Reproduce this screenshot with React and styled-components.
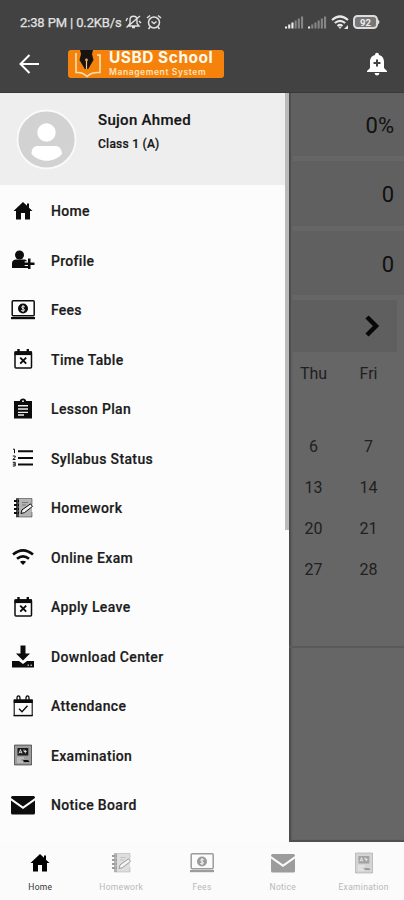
import React from "react";
import styled, { createGlobalStyle } from "styled-components";

const GlobalStyle = createGlobalStyle`
  * { box-sizing: border-box; }
  body { margin: 0; background: #fafafa; font-family: Roboto, sans-serif; }
  svg { display: block; flex: none; }
`;

const Screen = styled.div`
  width: 404px;
  height: 900px;
  display: flex;
  flex-direction: column;
  overflow: hidden;
  background: #fafafa;
`;

const Header = styled.header`
  height: 93px;
  flex: none;
  background: #424242;
  border-bottom: 1px solid #383838;
  color: #fff;
`;

const StatusBar = styled.div`
  height: 44px;
  padding: 0 24px 0 20px;
  display: flex;
  align-items: center;
  justify-content: space-between;
`;

const StatusText = styled.div`
  display: flex;
  align-items: center;
  gap: 4px;
  color: #e2e2e2;
  font-size: 13px;
  white-space: nowrap;
  -webkit-text-stroke: 0.25px #e2e2e2;
`;

const ClockLabel = styled.span`
  width: 101px;
  letter-spacing: -0.13px;
`;

const StatusIcons = styled.div`
  display: flex;
  align-items: center;
  gap: 4px;
`;

const AppBar = styled.div`
  height: 40px;
  padding: 0 15px 0 18px;
  display: flex;
  align-items: center;
`;

const Brand = styled.div`
  width: 156px;
  height: 28px;
  margin-left: 27px;
  margin-right: auto;
  padding-left: 4px;
  border-radius: 3px;
  background: #f5820b;
  display: flex;
  align-items: center;
  gap: 7px;
`;

const BrandText = styled.div`
  display: flex;
  flex-direction: column;
  gap: 1px;
  margin-top: -2px;
  white-space: nowrap;
`;

const BrandName = styled.span`
  font: 700 15.5px/16px Inter, sans-serif;
  letter-spacing: 0.5px;
  color: #fffaf0;
`;

const BrandSub = styled.span`
  font: 600 8.5px/10px Inter, sans-serif;
  letter-spacing: 0.6px;
  color: #ffe3bd;
`;

const Body = styled.div`
  flex: 1;
  min-height: 0;
  display: flex;
`;

const Drawer = styled.aside`
  position: relative;
  width: 289px;
  flex: none;
  background: #fcfcfc;
`;

const ScrollThumb = styled.div`
  position: absolute;
  top: 0;
  right: 0;
  width: 4px;
  height: 437px;
  background: #b9b9b9;
`;

const ProfileCard = styled.div`
  height: 92px;
  padding: 16px 16px 0;
  display: flex;
  gap: 21px;
  background: #eee;
`;

const ProfileText = styled.div`
  padding-top: 1px;
  display: flex;
  flex-direction: column;
  color: #161616;
`;

const StudentName = styled.span`
  font-size: 15px;
  line-height: 20px;
  font-weight: 500;
  letter-spacing: 0.3px;
  -webkit-text-stroke: 0.2px #161616;
`;

const StudentClass = styled.span`
  margin-top: 6px;
  font-size: 12px;
  line-height: 16px;
  font-weight: 500;
  letter-spacing: 0.25px;
  -webkit-text-stroke: 0.2px #161616;
`;

const Menu = styled.nav`
  padding-top: 1px;
`;

const MenuItem = styled.div`
  height: 49.5px;
  padding-left: 11px;
  display: flex;
  align-items: center;
  gap: 16px;
  color: #0c0c0c;
`;

const MenuLabel = styled.span`
  font-size: 14px;
  line-height: 18px;
  padding-top: 1px;
  font-weight: 500;
  color: #1c1c1c;
  -webkit-text-stroke: 0.2px #1c1c1c;
  letter-spacing: ${(p) => p.$tracking}px;
`;

const Page = styled.main`
  flex: 1;
  min-width: 0;
  background: #666;
  border-bottom: 2px solid #505050;
  box-shadow: inset 3px 0 2px -1px #484848;
  color: #101010;
`;

const StatCard = styled.div`
  height: ${(p) => p.$height}px;
  margin-bottom: 5px;
  padding: 2px 10px 0 0;
  margin-left: 2px;
  display: flex;
  align-items: center;
  justify-content: flex-end;
  background: #606060;
  font-size: 22px;
`;

const MonthBar = styled.div`
  height: 52px;
  margin: 3px 7px 0 2px;
  padding-right: 17px;
  display: flex;
  align-items: center;
  justify-content: flex-end;
  background: #5f5f5f;
`;

const Calendar = styled.div`
  height: 296px;
  padding-top: 1px;
  border-bottom: 2px solid #595959;
  display: grid;
  grid-template-columns: 49px 61px;
  grid-template-rows: 40px 33px repeat(4, 41px);
  align-content: start;
  text-align: center;
  font-size: 16px;
  color: #202020;
`;

const Cell = styled.span`
  line-height: 41px;
  grid-row: ${(p) => p.$row};
`;

const BottomNav = styled.nav`
  height: 58px;
  flex: none;
  display: grid;
  grid-template-columns: repeat(5, 1fr);
  background: #fbfbfb;
`;

const Tab = styled.div`
  display: flex;
  flex-direction: column;
  align-items: center;
  padding-top: 9px;
  gap: 6px;
  color: ${(p) => (p.$active ? "#000" : "#9c9c9c")};
`;

const TabLabel = styled.span`
  font-size: 8.5px;
  line-height: 12px;
  letter-spacing: 0.3px;
  color: ${(p) => (p.$active ? "#333" : "#b8b8b8")};
`;

const glyphs = {
  home: <path d="M12 3 2.5 12H5v8.5h5V14h4v6.5h5V12h2.5L18 8.7V4.5h-2v2.3Z" fill="currentColor" />,
  profile: (
    <g fill="currentColor">
      <circle cx="8.5" cy="7" r="4.5" />
      <path d="M1 20v-4.500c0-3 2-4 4-4h8c1.5 0 2.500.7 3 1.700h-2.300v4.800H17v2Z" />
      <path d="M17 10.500h2.500v4h4V17h-4v4H17v-4h-4v-2.500h4Z" />
    </g>
  ),
  fees: (
    <g>
      <rect x="1.2" y="2.8" width="22" height="15" rx="1" fill="none" stroke="currentColor" strokeWidth="1.5" />
      <path d="M0 19h24v2.2H0Z" fill="currentColor" />
      <circle cx="12" cy="10.5" r="5" fill="currentColor" />
      <path d="M13.8 8.8c-2.800-1.600-4.500.8-1.800 1.700 3 .9 1 3.600-1.800 1.900M12 7.200v6.600" fill="none" stroke="#fafafa" strokeWidth="1" />
    </g>
  ),
  calendarX: (
    <g fill="none" stroke="currentColor">
      <rect x="4" y="5" width="16.5" height="16" rx="1" strokeWidth="1.5" />
      <path d="M3.5 6.2h17.5" strokeWidth="3.8" />
      <path d="M7.5 2v4M16.8 2v4" strokeWidth="2.4" />
      <path d="m9.2 10.7 6 6m0-6-6 6" strokeWidth="1.9" />
    </g>
  ),
  clipboard: (
    <g>
      <path d="M3 4h5.800C9 2.800 10.200 1.500 12 1.500s3 1.300 3.200 2.500H21v17.500H3Z" fill="currentColor" />
      <circle cx="12" cy="4.2" r=".9" fill="#fff" />
      <path d="M7 8.700h10M7 12h10M7 15.400h10M7 18h6" stroke="#eee" strokeWidth="1.4" />
    </g>
  ),
  list: (
    <g fill="none" stroke="currentColor">
      <path d="M7 5.300h15M7 12h15M7 18.500h15" strokeWidth="1.9" />
      <path d="M2 3.200h1.500v4M1.800 10h2.400v1.300l-2.400 2.200h2.700M1.800 16.300h2.400V20H1.800m0-1.900h2.400" strokeWidth="1" />
    </g>
  ),
  homework: (
    <g>
      <rect x="5" y="2.5" width="16" height="18.5" fill="currentColor" opacity=".3" />
      <path d="M5 2.500h16v6M21 16v5H5" fill="none" stroke="currentColor" strokeWidth=".8" opacity=".55" />
      <path d="M5 2.500h3V21H5Z" fill="currentColor" opacity=".65" />
      <path d="M3 5h5M3 9h5M3 13h5M3 17h5" stroke="currentColor" strokeWidth="2" strokeDasharray="3 1" />
      <path d="m10 17.500 1-3.600 8.500-6 2 2.500-8 6.200Z" fill="#f5f5f5" stroke="currentColor" strokeWidth="1" />
      <path d="M11 6.500h6M11 9h4" stroke="currentColor" strokeWidth=".7" opacity=".5" />
    </g>
  ),
  wifi: (
    <g fill="none" stroke="currentColor" strokeWidth="2.6">
      <path d="M2 9.500q10-8.400 20 0M6 13.800q6-5 12 0" />
      <path d="m8.900 16.700 3.100 3.200 3.100-3.200q-3.100-2-6.200 0Z" fill="currentColor" stroke="none" />
    </g>
  ),
  download: (
    <g fill="currentColor">
      <path d="M9.500 1.500h5v8H19l-7 7-7-7h4.500Z" />
      <path d="M1 17h7l4 3 4-3h7v6.500H1Z" />
      <path d="M16.500 21.200h1.500m1.500 0H21" stroke="#fff" strokeWidth="1" />
    </g>
  ),
  calendarCheck: (
    <g fill="none" stroke="currentColor">
      <path d="M3.200 6v15.500h18V6" strokeWidth="1.1" />
      <path d="M2.600 21.600h19" strokeWidth="1.5" />
      <path d="M2.700 5.200h19v3.800h-19Z" fill="currentColor" stroke="none" />
      <path d="M6 8V4.200C6 1 9 1 9 4.200V7m6 1V4.200c0-3.200 3-3.200 3 0V7" strokeWidth="1.3" />
      <path d="m8 14.800 3 3 5.500-6" strokeWidth="1.4" />
    </g>
  ),
  exam: (
    <g>
      <rect x="3.5" y="2" width="17" height="20" fill="currentColor" opacity=".4" />
      <path d="M3.500 2h17v20h-17Z" fill="none" stroke="currentColor" strokeWidth="1" opacity=".55" />
      <path d="M6.500 5h10.800v7.500H6.500Z" fill="currentColor" opacity=".9" />
      <path d="m8 10.500 1.500-4 1.500 4M8.500 9.300h2M13 6.500v2h2.700M14.300 7v3.300" fill="none" stroke="#e5e5e5" strokeWidth=".9" />
      <path d="M6 15h7M6 17h4M6 19h6" stroke="#fff" opacity=".6" />
      <path d="M12 17h5l1.500 2H13Z" fill="currentColor" />
    </g>
  ),
  mail: (
    <g fill="currentColor">
      <path d="M1.500 3h21Q24 3 24 5l-12 8.500L0 5q0-2 1.500-2Z" />
      <path d="m0 7.500 12 8.500 12-8.500V20q0 1.500-1.500 1.500h-21Q0 21.500 0 20Z" />
    </g>
  ),
};

const Icon = ({ name, size = 24 }) => (
  <svg width={size} height={size} viewBox="0 0 24 24" aria-hidden="true">
    {glyphs[name]}
  </svg>
);

const Signal = ({ strength }) => (
  <svg width="19" height="13" viewBox="0 0 19 13">
    {[2, 4, 6, 8, 10, 12].map((h, i) => (
      <rect key={h} x={i * 3.2} y={12.5 - h} width="2.1" height={h} fill={i < strength ? "#eee" : "#858585"} />
    ))}
  </svg>
);

const menu = [
  ["home", "Home", 0.35],
  ["profile", "Profile", 0.3],
  ["fees", "Fees", 0.25],
  ["calendarX", "Time Table", 0.35],
  ["clipboard", "Lesson Plan", 0.32],
  ["list", "Syllabus Status", 0.36],
  ["homework", "Homework", 0.4],
  ["wifi", "Online Exam", 0.37],
  ["calendarX", "Apply Leave", 0.35],
  ["download", "Download Center", 0.35],
  ["calendarCheck", "Attendance", 0.35],
  ["exam", "Examination", 0.33],
  ["mail", "Notice Board", 0.35],
];

const tabs = [
  ["home", "Home"],
  ["homework", "Homework"],
  ["fees", "Fees"],
  ["mail", "Notice"],
  ["exam", "Examination"],
];

const weeks = [[6, 7], [13, 14], [20, 21], [27, 28]];

export default function App() {
  return (
    <Screen>
      <GlobalStyle />
      <Header>
        <StatusBar>
          <StatusText>
            <ClockLabel>2:38 PM | 0.2KB/s</ClockLabel>
            <svg width="17" height="16" viewBox="0 0 17 16" fill="none" stroke="#e2e2e2" strokeWidth="1.4">
              <path d="M3 12h11l-2-2.500V6c0-5-7-5-7 0v3.500Zm4 1.500h3M1.500 13.500 15 2M1 7l1.500-3M14 7l2 2" />
            </svg>
            <svg width="16" height="16" viewBox="0 0 16 16" fill="none" stroke="#e2e2e2" strokeWidth="1.5">
              <circle cx="8" cy="8.5" r="5.5" />
              <path d="M5.500 7.500 8 9.500l2.500-2M1 4l3-2.500M15 4l-3-2.500M4 13l-1.500 2M12 13l1.500 2" />
            </svg>
          </StatusText>
          <StatusIcons>
            <Signal strength={3} />
            <Signal strength={1} />
            <svg width="18" height="15" viewBox="0 0 18 15" fill="none" stroke="#e8e8e8" strokeWidth="2.2">
              <path d="M1 5q8-7 16 0M3.800 8q5.200-4.400 10.400 0M6.500 11q2.500-2 5 0" />
              <path d="m7.500 12 1.500 2 1.500-2ZM13 14h4v-4Z" fill="#e8e8e8" stroke="none" />
            </svg>
            <svg width="27" height="14" viewBox="0 0 27 14">
              <rect x="1" y="1" width="23" height="12" rx="3.5" fill="#777" stroke="#ddd" strokeWidth="2" />
              <path d="M25 4.500q3 2.500 0 5Z" fill="#ddd" />
              <text x="12.5" y="10.5" textAnchor="middle" fontFamily="Roboto" fontWeight="700" fontSize="9.5" fill="#eee">92</text>
            </svg>
          </StatusIcons>
        </StatusBar>
        <AppBar>
          <svg width="23" height="22" viewBox="0 0 23 22" fill="none" stroke="#fff" strokeWidth="2">
            <path d="M21 11H3M11.500 2 2.500 11l9 9" />
          </svg>
          <Brand>
            <svg width="30" height="28" viewBox="0 0 30 28">
              <path d="M4 3v19.500q7-.5 11 4 4-4.500 13-4V5h-3" fill="none" stroke="#ffe0b4" strokeWidth="1.6" />
              <path d="M8 0h13l-1 4 1.500 6-5.300 9h-3.400L7.500 10 9 4Z" fill="#171310" />
              <path d="M14.500 19V10" stroke="#f5c08a" strokeWidth="1.2" />
              <circle cx="14.5" cy="10" r="1.4" fill="#f5a04a" />
            </svg>
            <BrandText>
              <BrandName>USBD School</BrandName>
              <BrandSub>Management System</BrandSub>
            </BrandText>
          </Brand>
          <svg width="24" height="24" viewBox="0 0 24 24">
            <path d="M10 3c0-3 4-3 4 0 3.800.7 5 4 5 7v6l3 3v1H2v-1l3-3v-6c0-3 1.200-6.300 5-7Z" fill="#fff" />
            <path d="M9.500 21h5q-.5 2.500-2.500 2.500T9.500 21Z" fill="#fff" />
            <path d="M12 7.500v7M8.500 11h7" stroke="#424242" strokeWidth="2" />
          </svg>
        </AppBar>
      </Header>
      <Body>
        <Drawer>
          <ProfileCard>
            <svg width="61" height="61" viewBox="0 0 61 61">
              <circle cx="30.5" cy="30.5" r="29" fill="#d2d2d2" stroke="#fafafa" strokeWidth="1.8" />
              <circle cx="30.5" cy="23.5" r="9.2" fill="#fff" />
              <path d="M15.500 45c0-6 3-8 6-8h18c3 0 6 2 6.500 8-8 9-22.500 9-30.500 0Z" fill="#fff" />
            </svg>
            <ProfileText>
              <StudentName>Sujon Ahmed</StudentName>
              <StudentClass>Class 1 (A)</StudentClass>
            </ProfileText>
          </ProfileCard>
          <Menu>
            {menu.map(([icon, label, tracking]) => (
              <MenuItem key={label}>
                <Icon name={icon} />
                <MenuLabel $tracking={tracking}>{label}</MenuLabel>
              </MenuItem>
            ))}
          </Menu>
          <ScrollThumb />
        </Drawer>
        <Page>
          <StatCard $height={63}>0%</StatCard>
          <StatCard $height={65}>0</StatCard>
          <StatCard $height={64}>0</StatCard>
          <MonthBar>
            <svg width="16" height="22" viewBox="0 0 16 22" fill="none" stroke="#080808" strokeWidth="4.5">
              <path d="m3 2 9 9-9 9" />
            </svg>
          </MonthBar>
          <Calendar>
            <Cell $row={1}>Thu</Cell>
            <Cell $row={1}>Fri</Cell>
            {weeks.map((week, i) =>
              week.map((day) => <Cell key={day} $row={i + 3}>{day}</Cell>)
            )}
          </Calendar>
        </Page>
      </Body>
      <BottomNav>
        {tabs.map(([icon, label], i) => (
          <Tab key={label} $active={i === 0}>
            <Icon name={icon} />
            <TabLabel $active={i === 0}>{label}</TabLabel>
          </Tab>
        ))}
      </BottomNav>
    </Screen>
  );
}
